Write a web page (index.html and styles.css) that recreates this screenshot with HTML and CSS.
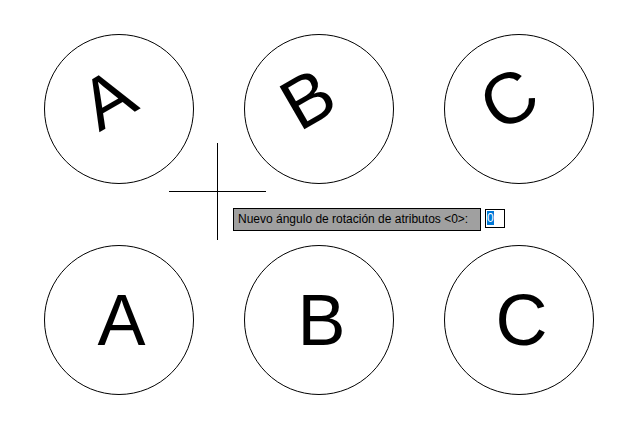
FILE: index.html
```html
<!DOCTYPE html>
<html lang="es">
<head>
<meta charset="utf-8">
<title>Rotación de atributos</title>
<link rel="stylesheet" href="styles.css">
</head>
<body>
<div class="canvas">
  <div class="grid">
    <div class="circle"><span class="letter rot">A</span></div>
    <div class="circle"><span class="letter rot">B</span></div>
    <div class="circle"><span class="letter rot">C</span></div>
    <div class="circle"><span class="letter">A</span></div>
    <div class="circle"><span class="letter">B</span></div>
    <div class="circle"><span class="letter">C</span></div>
  </div>
  <div class="cursor"></div>
  <div class="prompt">
    <div class="prompt-label">Nuevo ángulo de rotación de atributos &lt;0&gt;:</div>
    <div class="prompt-input"><span class="sel">0</span></div>
  </div>
</div>
</body>
</html>
```
FILE: styles.css
```css
html, body {
  margin: 0;
  padding: 0;
  background: #ffffff;
}

.canvas {
  position: relative;
  width: 634px;
  height: 421px;
  overflow: hidden;
  background: #ffffff;
}

.grid {
  display: grid;
  grid-template-columns: repeat(3, 150px);
  grid-auto-rows: 150px;
  column-gap: 50px;
  row-gap: 61px;
  padding: 34px 0 0 44px;
}

.circle {
  box-sizing: border-box;
  width: 150px;
  height: 150px;
  border: 1px solid #000000;
  border-radius: 50%;
  display: flex;
  align-items: center;
  justify-content: center;
}

.letter {
  display: block;
  font-family: "Liberation Sans", Arial, sans-serif;
  font-size: 72px;
  line-height: 72px;
  color: #000000;
  margin-left: 5px;
}

.rot {
  transform: translate(-13.5px, -10.5px) rotate(-30deg);
}

.cursor {
  position: absolute;
  left: 169px;
  top: 143px;
  width: 97px;
  height: 97px;
}

.cursor::before {
  content: "";
  position: absolute;
  left: 0;
  top: 48px;
  width: 97px;
  height: 1px;
  background: #000000;
}

.cursor::after {
  content: "";
  position: absolute;
  left: 48px;
  top: 0;
  width: 1px;
  height: 97px;
  background: #000000;
}

.prompt {
  position: absolute;
  left: 233px;
  top: 208px;
  display: flex;
  align-items: flex-start;
  gap: 4px;
}

.prompt-label {
  box-sizing: border-box;
  width: 248px;
  height: 23px;
  border: 1px solid #000000;
  background: #a0a0a0;
  padding: 0 0 0 4px;
  font-family: "Liberation Sans", Arial, sans-serif;
  font-size: 12px;
  line-height: 20px;
  color: #000000;
  white-space: nowrap;
}

.prompt-input {
  box-sizing: border-box;
  width: 20px;
  height: 19px;
  margin-top: 1px;
  border: 1px solid #000000;
  background: #ffffff;
  padding: 1px 0 0 1px;
}

.sel {
  display: block;
  width: 7px;
  height: 14px;
  background: #0078d7;
  color: #ffffff;
  font-family: "Liberation Sans", Arial, sans-serif;
  font-size: 12px;
  line-height: 14px;
}
```
